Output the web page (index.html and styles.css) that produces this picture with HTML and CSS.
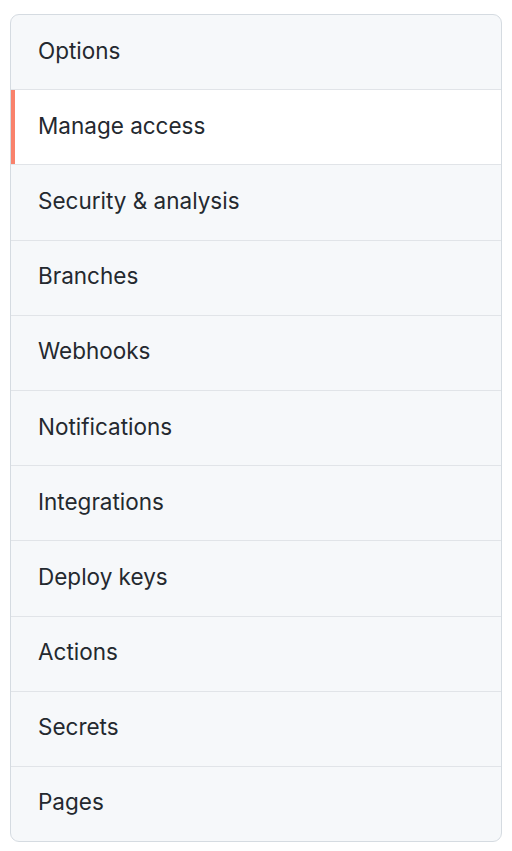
FILE: index.html
```html
<!DOCTYPE html>
<html>
<head>
<meta charset="utf-8">
<link rel="stylesheet" href="styles.css">
</head>
<body>
<nav class="menu">
  <a class="menu-item">Options</a>
  <a class="menu-item selected">Manage access</a>
  <a class="menu-item">Security &amp; analysis</a>
  <a class="menu-item">Branches</a>
  <a class="menu-item">Webhooks</a>
  <a class="menu-item">Notifications</a>
  <a class="menu-item">Integrations</a>
  <a class="menu-item">Deploy keys</a>
  <a class="menu-item">Actions</a>
  <a class="menu-item">Secrets</a>
  <a class="menu-item">Pages</a>
</nav>
</body>
</html>
```

FILE: styles.css
```css
html, body {
  margin: 0;
  padding: 0;
  background: #ffffff;
}
body {
  padding: 14px 10px 0 10px;
  font-family: Inter, "Liberation Sans", sans-serif;
}
.menu {
  display: flex;
  flex-direction: column;
  box-sizing: border-box;
  width: 492px;
  height: 828px;
  border: 1px solid #d5dbe1;
  border-radius: 9px;
  overflow: hidden;
  background: #f6f8fa;
}
.menu-item {
  position: relative;
  display: flex;
  align-items: center;
  flex: 1 1 0;
  padding: 0 0 4px 27px;
  font-size: 22.5px;
  color: #24292f;
  border-bottom: 1px solid #e1e4e8;
}
.menu-item:last-child {
  border-bottom: none;
}
.menu-item.selected {
  background: #ffffff;
}
.menu-item.selected::before {
  content: "";
  position: absolute;
  left: 0;
  top: 0;
  bottom: 0;
  width: 4px;
  background: #f9826c;
}
```
